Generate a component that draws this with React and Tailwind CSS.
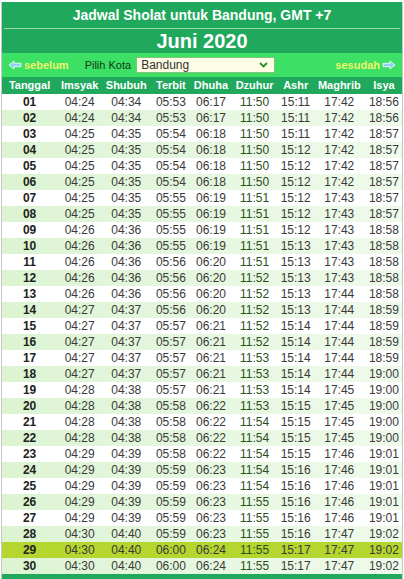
const rows = [
  ['01', '04:24', '04:34', '05:53', '06:17', '11:50', '15:11', '17:42', '18:56'],
  ['02', '04:24', '04:34', '05:53', '06:17', '11:50', '15:11', '17:42', '18:56'],
  ['03', '04:25', '04:35', '05:54', '06:18', '11:50', '15:11', '17:42', '18:57'],
  ['04', '04:25', '04:35', '05:54', '06:18', '11:50', '15:12', '17:42', '18:57'],
  ['05', '04:25', '04:35', '05:54', '06:18', '11:50', '15:12', '17:42', '18:57'],
  ['06', '04:25', '04:35', '05:54', '06:18', '11:50', '15:12', '17:42', '18:57'],
  ['07', '04:25', '04:35', '05:55', '06:19', '11:51', '15:12', '17:43', '18:57'],
  ['08', '04:25', '04:35', '05:55', '06:19', '11:51', '15:12', '17:43', '18:57'],
  ['09', '04:26', '04:36', '05:55', '06:19', '11:51', '15:12', '17:43', '18:58'],
  ['10', '04:26', '04:36', '05:55', '06:19', '11:51', '15:13', '17:43', '18:58'],
  ['11', '04:26', '04:36', '05:56', '06:20', '11:51', '15:13', '17:43', '18:58'],
  ['12', '04:26', '04:36', '05:56', '06:20', '11:52', '15:13', '17:43', '18:58'],
  ['13', '04:26', '04:36', '05:56', '06:20', '11:52', '15:13', '17:44', '18:58'],
  ['14', '04:27', '04:37', '05:56', '06:20', '11:52', '15:13', '17:44', '18:59'],
  ['15', '04:27', '04:37', '05:57', '06:21', '11:52', '15:14', '17:44', '18:59'],
  ['16', '04:27', '04:37', '05:57', '06:21', '11:52', '15:14', '17:44', '18:59'],
  ['17', '04:27', '04:37', '05:57', '06:21', '11:53', '15:14', '17:44', '18:59'],
  ['18', '04:27', '04:37', '05:57', '06:21', '11:53', '15:14', '17:44', '19:00'],
  ['19', '04:28', '04:38', '05:57', '06:21', '11:53', '15:14', '17:45', '19:00'],
  ['20', '04:28', '04:38', '05:58', '06:22', '11:53', '15:15', '17:45', '19:00'],
  ['21', '04:28', '04:38', '05:58', '06:22', '11:54', '15:15', '17:45', '19:00'],
  ['22', '04:28', '04:38', '05:58', '06:22', '11:54', '15:15', '17:45', '19:00'],
  ['23', '04:29', '04:39', '05:58', '06:22', '11:54', '15:15', '17:46', '19:01'],
  ['24', '04:29', '04:39', '05:59', '06:23', '11:54', '15:16', '17:46', '19:01'],
  ['25', '04:29', '04:39', '05:59', '06:23', '11:54', '15:16', '17:46', '19:01'],
  ['26', '04:29', '04:39', '05:59', '06:23', '11:55', '15:16', '17:46', '19:01'],
  ['27', '04:29', '04:39', '05:59', '06:23', '11:55', '15:16', '17:46', '19:01'],
  ['28', '04:30', '04:40', '05:59', '06:23', '11:55', '15:16', '17:47', '19:02'],
  ['29', '04:30', '04:40', '06:00', '06:24', '11:55', '15:17', '17:47', '19:02'],
  ['30', '04:30', '04:40', '06:00', '06:24', '11:55', '15:17', '17:47', '19:02'],
];

const heads = ['Tanggal', 'Imsyak', 'Shubuh', 'Terbit', 'Dhuha', 'Dzuhur', 'Ashr', 'Maghrib', 'Isya'];
const widths = ['w-[55px]', 'w-[45px]', 'w-[48px]', 'w-[41px]', 'w-[39px]', 'w-[48px]', 'w-[34px]', 'w-[53px]', 'w-[36px]'];

function Arrow({ flip = false }) {
  return (
    <svg width="14" height="10" viewBox="0 0 14 10" className={flip ? 'rotate-180' : ''}>
      <path d="M1 5 L6 1 L6 3.3 L13 3.3 L13 6.7 L6 6.7 L6 9 Z" fill="#8fd0f5" stroke="#ffffff" strokeWidth="0.8" />
    </svg>
  );
}

export default function App() {
  return (
    <div className="bg-white px-[1px] pt-[2px] font-['Liberation_Sans',Arial,sans-serif]">
      <div className="border-x border-[#c9c9c9]">
        <div className="bg-[#20a85c] text-white text-center">
          <div className="h-[27px] flex items-center justify-center text-[14px] font-bold border-b border-[#9fdcb6] mx-[2px]">
            Jadwal Sholat untuk Bandung, GMT +7
          </div>
          <div className="h-[24px] flex items-center justify-center text-[20px] font-bold">Juni 2020</div>
        </div>
        <div className="h-[24px] bg-[#3ce064] flex items-center px-[6px] text-[11px]">
          <div className="flex items-center gap-[2px] font-bold text-[#eef56a]">
            <Arrow />
            <span>sebelum</span>
          </div>
          <span className="ml-[16px] text-[#163a16]">Pilih Kota</span>
          <div className="ml-[5px] w-[139px] h-[16px] bg-[#fdfde6] border border-[#7fc37f] flex items-center justify-between pl-[4px] pr-[6px] text-[12px] text-[#333]">
            <span>Bandung</span>
            <svg width="9" height="6" viewBox="0 0 9 6">
              <path d="M1 1 L4.5 4.5 L8 1" fill="none" stroke="#2a8a2a" strokeWidth="1.8" />
            </svg>
          </div>
          <div className="ml-auto flex items-center gap-[2px] font-bold text-[#eef56a]">
            <span>sesudah</span>
            <Arrow flip />
          </div>
        </div>
        <table className="w-full border-collapse table-fixed">
          <thead>
            <tr className="bg-[#20a85c] text-white text-[11px] font-bold h-[16px]">
              {heads.map((h, i) => (
                <th key={h} className={`${widths[i]} p-0 font-bold`}>{h}</th>
              ))}
            </tr>
          </thead>
          <tbody>
            {rows.map((r, ri) => {
              const today = r[0] === '29';
              const bg = today ? 'bg-[#b5d52f]' : ri % 2 === 1 ? 'bg-gradient-to-r from-[#dcf4d2] to-[#f0faec]' : 'bg-white';
              return (
                <tr key={r[0]} className={`${bg} h-[16px] text-[12px]`}>
                  {r.map((c, ci) => (
                    <td
                      key={ci}
                      className={`p-0 text-center leading-[16px] ${ci === 0 ? 'font-bold text-[#222]' : ci === 5 ? 'text-[#2a4f22]' : 'text-[#3a3a3a]'}`}
                    >
                      {c}
                    </td>
                  ))}
                </tr>
              );
            })}
          </tbody>
        </table>
        <div className="h-[10px] bg-[#20a85c]" />
      </div>
    </div>
  );
}
